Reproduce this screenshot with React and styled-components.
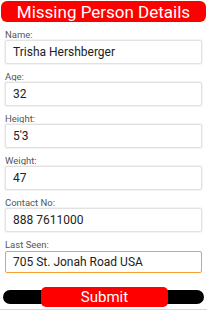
import React from 'react'
import styled, { createGlobalStyle } from 'styled-components'

const Global = createGlobalStyle`
  html, body {
    margin: 0;
    padding: 0;
    background: #fff;
  }
  body {
    font-family: Roboto, "Liberation Sans", sans-serif;
    width: 207px;
    height: 310px;
    overflow: hidden;
  }
`

const fields = [
  { label: 'Name:', value: 'Trisha Hershberger' },
  { label: 'Age:', value: '32' },
  { label: 'Height:', value: "5'3" },
  { label: 'Weight:', value: '47' },
  { label: 'Contact No:', value: '888 7611000' },
  { label: 'Last Seen:', value: '705 St. Jonah Road USA', focused: true },
]

function App() {
  return (
    <Page>
      <Global />
      <Header>Missing Person Details</Header>
      <Form>
        {fields.map((f) => (
          <Field key={f.label}>
            <Label>{f.label}</Label>
            <Input $focused={f.focused}>{f.value}</Input>
          </Field>
        ))}
      </Form>
      <SubmitBar>
        <SubmitButton>Submit</SubmitButton>
      </SubmitBar>
      <BottomLine />
    </Page>
  )
}

export default App

let Page = styled.div`
  display: flex;
  flex-direction: column;
  height: 310px;
  box-sizing: border-box;
  padding-top: 1px;
`
let Header = styled.div`
  margin: 0 1px;
  height: 21px;
  background: #ff0000;
  border-radius: 6px;
  color: #fff;
  font-size: 17px;
  line-height: 22px;
  text-align: center;
`
let Form = styled.div`
  display: flex;
  flex-direction: column;
  gap: 7px;
  padding: 7px 5px 0 5px;
`
let Field = styled.div`
  display: flex;
  flex-direction: column;
`
let Label = styled.div`
  font-size: 9.5px;
  line-height: 11px;
  color: #555;
`
let Input = styled.div`
  box-sizing: border-box;
  height: 24px;
  display: flex;
  align-items: center;
  padding-left: 7px;
  font-size: 12px;
  color: #222;
  background: #fff;
  border: ${(p) => (p.$focused ? '1.5px solid #f5a033' : '1px solid #e2e2e2')};
  border-radius: 2px;
  box-shadow: ${(p) => (p.$focused ? 'none' : '0 0 0 1px #f3f3f3')};
  ${(p) => p.$focused && 'height: 22px; margin-top: 1px;'}
`
let SubmitBar = styled.div`
  margin: 17px 3px 0 3px;
  height: 14px;
  background: #000;
  border-radius: 7px;
  display: flex;
  justify-content: center;
  align-items: center;
`
let SubmitButton = styled.div`
  width: 127px;
  height: 20px;
  margin-left: 2px;
  background: #ff0000;
  border-radius: 5px;
  color: #fff;
  font-size: 15px;
  line-height: 21px;
  text-align: center;
`
let BottomLine = styled.div`
  margin-top: auto;
  height: 1px;
  background: #f6c6d6;
`
